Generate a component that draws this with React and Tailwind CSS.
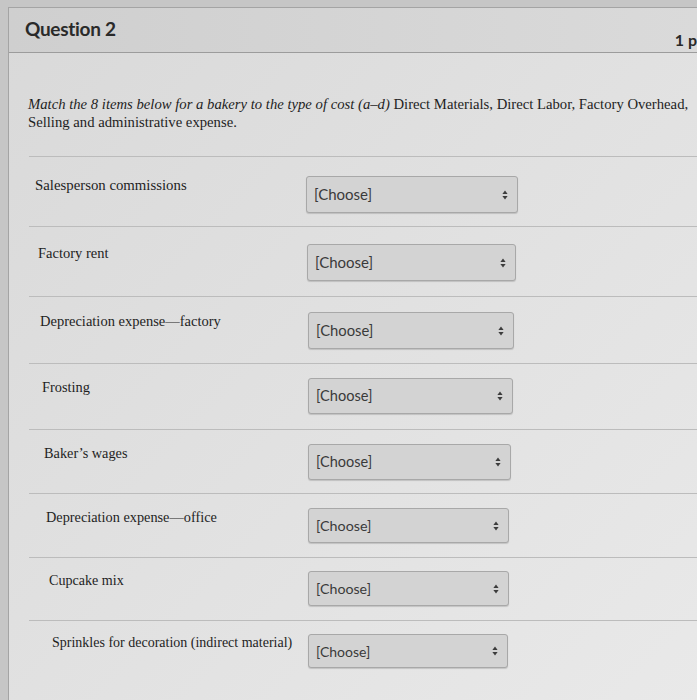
import React from "react";

const rows = [
  { label: "Salesperson commissions", row: "h-[70px] pt-[19px]", lab: "w-[277px] pl-[6px] text-[14.8px]", sel: "w-[212px] h-[37px]", ch: "text-[15px]" },
  { label: "Factory rent", row: "h-[70px] pt-[17px]", lab: "w-[278px] pl-[9px] text-[14.5px]", sel: "w-[209px] h-[37px]", ch: "text-[15px]" },
  { label: "Depreciation expense\u2014factory", row: "h-[67px] pt-[15px]", lab: "w-[279px] pl-[11px] text-[14.5px]", sel: "w-[206px] h-[37px]", ch: "text-[14.8px]" },
  { label: "Frosting", row: "h-[66px] pt-[14px]", lab: "w-[279px] pl-[13px] text-[14.4px]", sel: "w-[205px] h-[36px]", ch: "text-[14.6px]" },
  { label: "Baker\u2019s wages", row: "h-[64px] pt-[14px]", lab: "w-[279px] pl-[15px] text-[14.3px]", sel: "w-[203px] h-[36px]", ch: "text-[14.5px]" },
  { label: "Depreciation expense\u2014office", row: "h-[64px] pt-[14px]", lab: "w-[279px] pl-[17px] text-[14.3px]", sel: "w-[201px] h-[35px]", ch: "text-[14.3px]" },
  { label: "Cupcake mix", row: "h-[63px] pt-[13px]", lab: "w-[279px] pl-[20px] text-[14.1px]", sel: "w-[201px] h-[35px]", ch: "text-[14.2px]" },
  { label: "Sprinkles for decoration (indirect material)", row: "h-[80px] pt-[13px]", lab: "w-[279px] pl-[23px] text-[14px]", sel: "w-[200px] h-[34px]", ch: "text-[14px]" },
];

function Arrows() {
  return (
    <svg width="6" height="10" viewBox="0 0 6 10" className="shrink-0">
      <path d="M3 0.5 L5.6 4 L0.4 4 Z" fill="#3c3c3c" />
      <path d="M3 9.5 L5.6 6 L0.4 6 Z" fill="#3c3c3c" />
    </svg>
  );
}

export default function App() {
  return (
    <div className="w-[697px] h-[700px] overflow-hidden bg-[#c6c6c6] pt-[7px]">
      <div className="ml-[8px] h-[700px] border-l border-t border-[#a4a4a4] bg-linear-to-br from-[#d9d9d9] to-[#e9e9e9]">
        <div className="h-[45px] bg-linear-to-r from-[#cfcfcf] to-[#dadada] border-b border-[#9c9c9c] flex justify-between">
          <div className="pl-[16px] pt-[9px] text-[19px] leading-[24px] font-bold text-[#2a2a2a] font-['Lato',sans-serif] tracking-[-0.3px]">
            Question 2
          </div>
          <div className="pt-[22px] text-[16px] leading-[20px] font-bold text-[#2a2a2a] font-['Lato',sans-serif] whitespace-nowrap">
            1 p
          </div>
        </div>
        <div className="pl-[19px] pt-[42px] pr-[4px] h-[103px] text-[14.7px] leading-[18px] text-[#1e1e1e] font-['Liberation_Serif',serif]">
          <p>
            <span className="italic">Match the 8 items below for a bakery to the type of cost (a&ndash;d)</span> Direct Materials, Direct Labor, Factory Overhead, Selling and administrative expense.
          </p>
        </div>
        {rows.map((r, i) => (
          <div key={i} className={`ml-[20px] border-t border-[#bcbcbc] flex items-start ${r.row}`}>
            <div className={`${r.lab} shrink-0 leading-[18px] text-[#1e1e1e] font-['Liberation_Serif',serif]`}>
              {r.label}
            </div>
            <div className={`${r.sel} rounded-[3px] border border-[#a8a8a8] bg-[#d3d3d3] shadow-[0_1px_1px_rgba(0,0,0,0.15)] flex items-center justify-between pl-[7px] pr-[9px]`}>
              <span className={`${r.ch} text-[#3a3a3a] font-['Lato',sans-serif]`}>[Choose]</span>
              <Arrows />
            </div>
          </div>
        ))}
      </div>
    </div>
  );
}
